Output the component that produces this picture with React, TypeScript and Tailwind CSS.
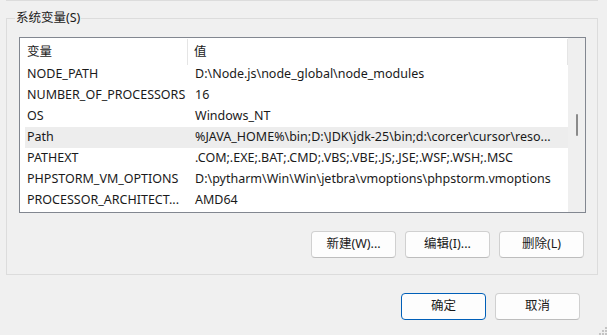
// System environment variables panel — Windows 11 style dialog section.

const ROWS: { name: string; value: string }[] = [
  { name: "NODE_PATH", value: "D:\\Node.js\\node_global\\node_modules" },
  { name: "NUMBER_OF_PROCESSORS", value: "16" },
  { name: "OS", value: "Windows_NT" },
  { name: "Path", value: "%JAVA_HOME%\\bin;D:\\JDK\\jdk-25\\bin;d:\\corcer\\cursor\\reso..." },
  { name: "PATHEXT", value: ".COM;.EXE;.BAT;.CMD;.VBS;.VBE;.JS;.JSE;.WSF;.WSH;.MSC" },
  { name: "PHPSTORM_VM_OPTIONS", value: "D:\\pytharm\\Win\\Win\\jetbra\\vmoptions\\phpstorm.vmoptions" },
  { name: "PROCESSOR_ARCHITECT...", value: "AMD64" },
];

const SELECTED = "Path";

export default function App() {
  return (
    <div
      className="relative w-[607px] h-[335px] overflow-hidden bg-[#f0f0f0] text-[12.5px] text-[#1a1a1a]"
      style={{ fontFamily: '"Noto Sans", "Noto Sans CJK SC", sans-serif' }}
    >
      {/* tail of the group box above */}
      <div className="ml-[6px] w-[592px] h-[1px] bg-[#dcdcdc]" />

      {/* 系统变量 group */}
      <div className="relative ml-[6px] mt-[17px] w-[592px] h-[257px] border border-[#dcdcdc] pl-[12px] pr-[12px] pt-[18px]">
        <span className="absolute left-[8px] top-[-10px] bg-[#f0f0f0] px-[1px] leading-[18px]">
          系统变量(S)
        </span>

        <div className="flex w-[567px] h-[176px] border border-[#828790] bg-white">
          <div className="flex-1 flex flex-col">
            {/* header */}
            <div className="flex h-[26px] items-center">
              <div className="w-[168px] h-full flex items-center pl-[7px] border-r border-[#e5e5e5] mt-[2px]">变量</div>
              <div className="flex-1 h-full flex items-center pl-[6px] border-r border-[#e5e5e5] mt-[2px]">值</div>
            </div>
            {ROWS.map((r) => (
              <div
                key={r.name}
                className={
                  "flex h-[21px] items-center ml-[5px] " +
                  (r.name === SELECTED ? "bg-[#ededed]" : "")
                }
              >
                <div className="w-[163px] pl-[2px] whitespace-nowrap overflow-hidden">{r.name}</div>
                <div className="flex-1 pl-[7px] whitespace-nowrap overflow-hidden">{r.value}</div>
              </div>
            ))}
          </div>
          {/* vertical scrollbar */}
          <div className="w-[17px] bg-[#efefef] flex justify-center pt-[76px]">
            <div className="w-[2px] h-[22px] rounded-full bg-[#8a8a8a]" />
          </div>
        </div>

        <div className="flex justify-end gap-[9px] mt-[18px] pr-[1px]">
          <WinButton label="新建(W)..." />
          <WinButton label="编辑(I)..." />
          <WinButton label="删除(L)" />
        </div>
      </div>

      <div className="flex justify-end gap-[9px] mt-[18px] mr-[27px]">
        <WinButton label="确定" primary />
        <WinButton label="取消" />
      </div>

      {/* size grip */}
      <svg className="absolute right-0 bottom-0" width="9" height="9" viewBox="0 0 9 9">
        {[
          [6, 0],
          [3, 3],
          [6, 3],
          [0, 6],
          [3, 6],
          [6, 6],
        ].map(([x, y]) => (
          <rect key={`${x}-${y}`} x={x + 1} y={y + 1} width="2" height="2" fill="#c4c4c4" />
        ))}
      </svg>
    </div>
  );
}

function WinButton({ label, primary }: { label: string; primary?: boolean }) {
  return (
    <button
      className={
        "w-[85px] h-[27px] rounded-[4px] border flex items-center justify-center " +
        (primary
          ? "border-[#005fb8] bg-[#fdfdfd]"
          : "border-[#d0d0d0] border-b-[#bdbdbd] bg-[#fdfdfd]")
      }
    >
      {label}
    </button>
  );
}
